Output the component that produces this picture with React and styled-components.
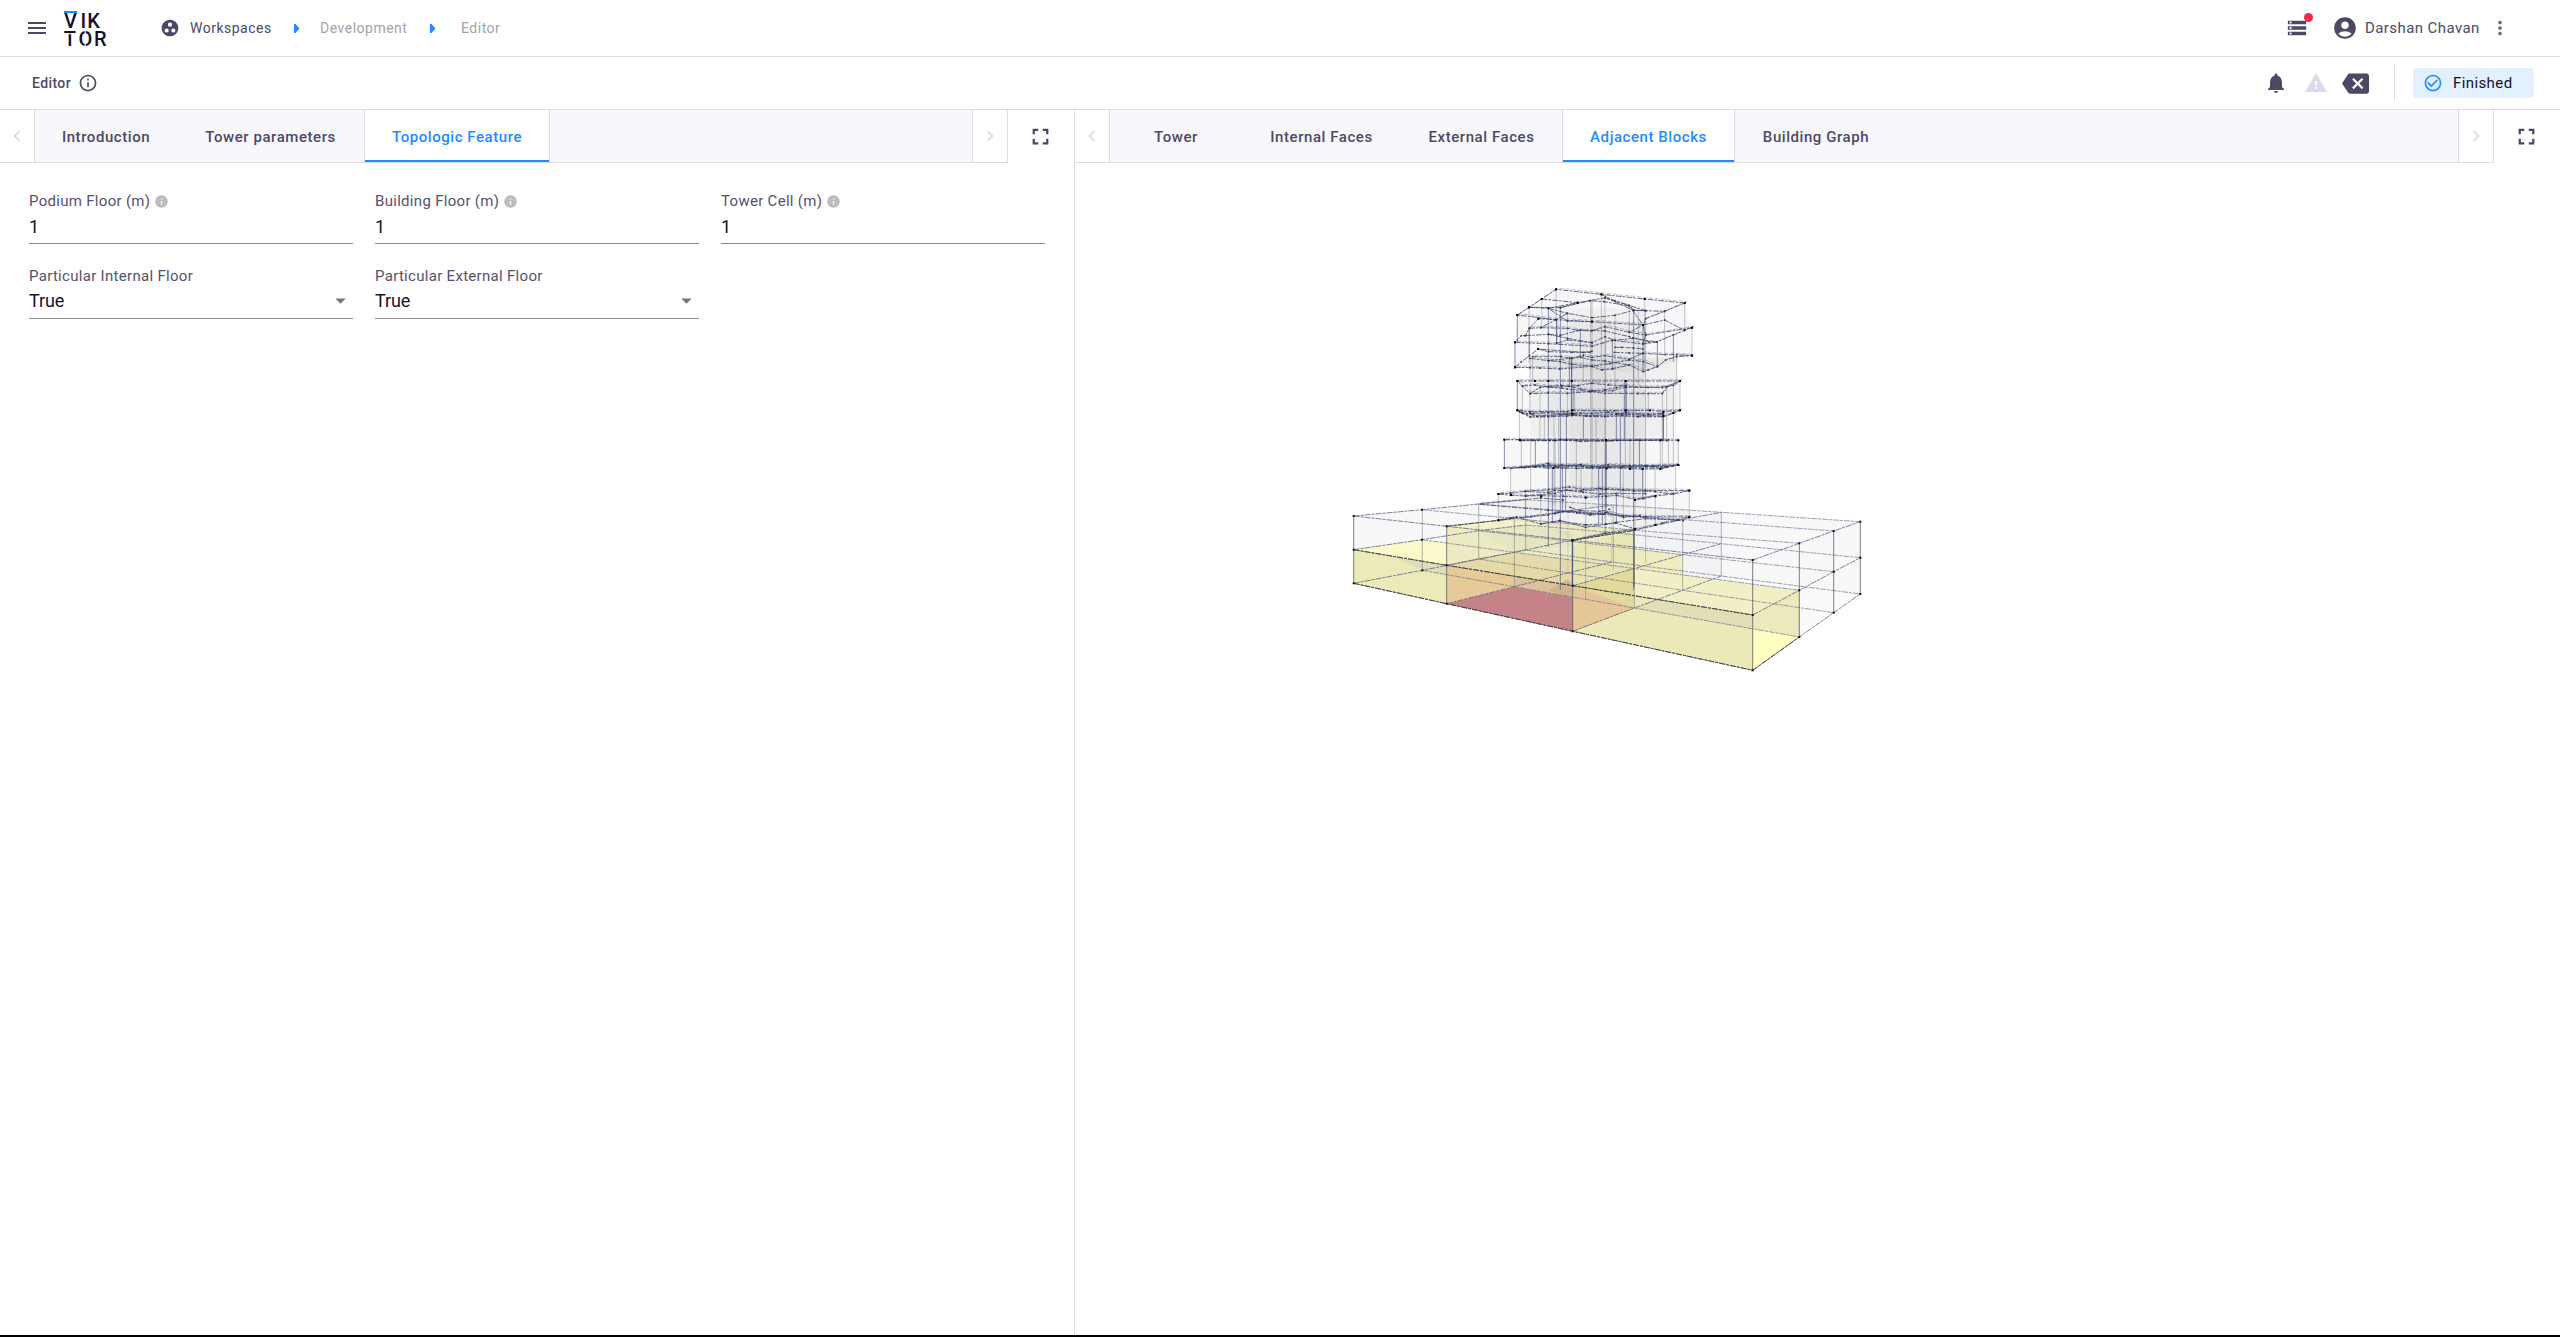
import React from "react";
import styled, { createGlobalStyle } from "styled-components";
import {
  MdMenu, MdGroupWork, MdStorage, MdAccountCircle, MdMoreVert, MdNotifications,
  MdWarning, MdBackspace, MdCheckCircleOutline, MdOutlineInfo, MdInfo,
  MdFullscreen, MdChevronLeft, MdChevronRight, MdArrowDropDown,
} from "react-icons/md";

const ink = "#4d4965";
const line = "#dddddf";
const blue = "#1e8cff";
const pale = "#dadaea";

const Global = createGlobalStyle`
  * { box-sizing: border-box; }
  body { margin: 0; background: #fff; font-family: Roboto, "Liberation Sans", sans-serif; color: ${ink}; }
  svg { display: block; flex: none; }
`;

const Page = styled.div`
  height: 1337px;
  display: flex;
  flex-direction: column;
  border-bottom: 2px solid #000;
  overflow: hidden;
`;

const Bar = styled.header`
  display: flex;
  align-items: center;
  flex: none;
  height: ${(p) => p.$height}px;
  padding: 0 ${(p) => p.$right}px 0 ${(p) => p.$left}px;
  border-bottom: 1px solid ${line};
`;

const Icon = styled.span`
  display: flex;
  align-items: center;
  justify-content: center;
  flex: none;
  width: ${(p) => p.$size}px;
  height: ${(p) => p.$size}px;
  margin-left: ${(p) => p.$gap || 0}px;
  color: ${(p) => p.$color || ink};
  svg { width: ${(p) => p.$size}px; height: ${(p) => p.$size}px; }
`;

const Logo = styled.svg`
  width: 44px;
  height: 38px;
  margin-left: 14px;
  overflow: visible;
  font: 500 20px Roboto, sans-serif;
  fill: #14122b;
`;

const Crumb = styled.span`
  font-size: 14px;
  letter-spacing: 0.5px;
  white-space: nowrap;
  width: ${(p) => p.$width}px;
  margin-left: ${(p) => p.$gap}px;
  color: ${(p) => (p.$muted ? "#a3a3a6" : ink)};
`;

const Arrow = styled.svg`
  width: 6px;
  height: 9px;
  margin-left: ${(p) => p.$gap}px;
  fill: ${blue};
`;

const Spacer = styled.div`
  flex: 1;
`;

const Alert = styled.div`
  position: relative;
  &::after {
    content: "";
    position: absolute;
    right: -5px;
    top: -4px;
    width: 9px;
    height: 9px;
    border-radius: 50%;
    background: #f02849;
  }
`;

const User = styled.span`
  width: 113px;
  margin-left: 7px;
  font-size: 15px;
  letter-spacing: 0.42px;
  white-space: nowrap;
`;

const Title = styled.span`
  width: 39px;
  font-size: 14px;
  font-weight: 500;
  letter-spacing: 0.4px;
`;

const Rule = styled.div`
  width: 1px;
  height: 36px;
  margin: 0 18px 0 25px;
  background: ${line};
`;

const Status = styled.div`
  display: flex;
  align-items: center;
  width: 121px;
  height: 30px;
  padding-left: 10px;
  gap: 10px;
  border-radius: 4px;
  background: #e2f0ff;
  color: #14122b;
  font-size: 15px;
  letter-spacing: 0.4px;
`;

const Body = styled.main`
  display: flex;
  flex: 1;
  min-height: 0;
`;

const Pane = styled.section`
  display: flex;
  flex-direction: column;
  flex: ${(p) => (p.$width ? `0 0 ${p.$width}px` : "1")};
  min-width: 0;
  border-right: ${(p) => (p.$width ? `1px solid ${line}` : "0")};
`;

const TabRow = styled.div`
  display: flex;
  height: 53px;
  flex: none;
`;

const Strip = styled.nav`
  display: flex;
  flex: 1;
  background: #f7f7fc;
  border-bottom: 1px solid ${line};
`;

const Nudge = styled.div`
  display: flex;
  align-items: center;
  justify-content: center;
  width: ${(p) => p.$width}px;
  border-right: 1px solid ${line};
  border-left: ${(p) => (p.$end ? 1 : 0)}px solid ${line};
  border-bottom: 1px solid ${line};
  background: #fff;
`;

const Tab = styled.a`
  display: flex;
  align-items: center;
  justify-content: center;
  width: ${(p) => p.$width}px;
  height: 52px;
  padding-top: 1px;
  font-size: 15px;
  font-weight: 500;
  letter-spacing: 0.56px;
  white-space: nowrap;
  color: ${(p) => (p.$active ? blue : ink)};
  background: ${(p) => (p.$active ? "#fff" : "transparent")};
  border: 0 solid ${line};
  border-width: 0 ${(p) => (p.$active ? 1 : 0)}px;
  box-shadow: ${(p) => (p.$active ? `inset 0 -2px 0 ${blue}` : "none")};
`;

const Expand = styled.div`
  display: flex;
  align-items: center;
  justify-content: center;
  width: 66px;
  padding-right: 1px;
`;

const Form = styled.div`
  display: grid;
  grid-template-columns: repeat(3, 324px);
  column-gap: 22px;
  row-gap: 22px;
  padding: 28px 29px;
`;

const Field = styled.div`
  height: 53px;
  border-bottom: 1px solid #8b8b8f;
`;

const Label = styled.div`
  display: flex;
  align-items: center;
  height: 20px;
  font-size: 15px;
  letter-spacing: 0.3px;
  color: #55516d;
`;

const Value = styled.div`
  display: flex;
  justify-content: space-between;
  align-items: center;
  height: ${(p) => (p.$select ? 29 : 31)}px;
  font-size: 18px;
  letter-spacing: -0.1px;
  color: #14122b;
`;

const Viewer = styled.svg`
  width: 1485px;
  height: 1172px;
`;

const TabsBar = ({ items, lead, end }) => (
  <TabRow>
    <Nudge $width={lead}><Icon $size={22} $color={pale}><MdChevronLeft /></Icon></Nudge>
    <Strip>
      {items.map(([t, w, a]) => <Tab key={t} $width={w} $active={a}>{t}</Tab>)}
    </Strip>
    <Nudge $width={end} $end><Icon $size={22} $color={pale}><MdChevronRight /></Icon></Nudge>
    <Expand><Icon $size={27}><MdFullscreen /></Icon></Expand>
  </TabRow>
);

const Input = ({ label, value, select }) => (
  <Field>
    <Label>{label}{!select && <Icon $size={15} $gap={4} $color="#bdbdbd"><MdInfo /></Icon>}</Label>
    <Value $select={select}>{value}{select && <Icon $size={25} $color="#757575"><MdArrowDropDown /></Icon>}</Value>
  </Field>
);

// Podium grid: rows run front to back, columns left to right.
const bottom = [
  [[1353.7, 583.3], [1446.7, 603.7], [1572.7, 631.3], [1752.7, 670.3]],
  [[1422.3, 570.3], [1514.3, 586.7], [1634.3, 608], [1799.3, 637]],
  [[1478.7, 559], [1568, 573], [1682.7, 590.3], [1833.7, 612.7]],
  [[1525.7, 550], [1612, 562], [1721.3, 576], [1860.3, 594]],
];
const middle = [
  [[1353.7, 549.7], [1446.7, 565.3], [1572.7, 585.7], [1752.7, 615]],
  [[1422, 539.7], [1514.3, 552.3], [1634.3, 568.5], [1799.3, 590.3]],
  [[1478.7, 530.7], [1568, 541], [1682.7, 554.7], [1833.7, 571.7]],
  [[1525.7, 525], [1612, 532.5], [1721.3, 543.7], [1860.3, 557.7]],
];
const top = [
  [[1353.7, 516], [1446.7, 526.3], [1572.7, 540.3], [1752.7, 560]],
  [[1422, 509.7], [1514.3, 518.5], [1634.3, 530.3], [1799.3, 543.3]],
  [[1478.7, 504], [1568, 511], [1682.7, 519.5], [1833.7, 531]],
  [[1525.7, 499.7], [1612, 505], [1721.3, 512.3], [1860.3, 521.7]],
];
const levels = [bottom, middle, top];
const join = (pts) => pts.map((p) => p.join(",")).join(" ");
const Face = ({ p, fill, o = 1 }) => <polygon points={join(p)} fill={fill} opacity={o} />;

const Podium = () => {
  const [b, m, t] = levels;
  return (
    <g>
      <Face p={[t[0][0], t[3][0], t[3][3], b[3][3], b[0][3], b[0][0]]} fill="#f8f8f9" />
      <Face p={[t[0][2], t[3][2], b[3][2], b[0][2]]} fill="#ececf0" o={0.4} />
      <Face p={[b[0][2], b[0][3], b[3][3], b[3][2]]} fill="#ffffff" o={0.35} />
      <Face p={[m[0][0], m[1][0], m[1][1], b[1][1], b[0][1], b[0][0]]} fill="#ebeab8" />
      <Face p={[m[0][0], m[1][0], m[1][1], m[0][1]]} fill="#fbf9cc" />
      <Face p={[[1394, 557], b[1][0], [1446.7, 575], m[0][1]]} fill="#dedeb8" />
      <Face p={[m[1][1], m[2][1], m[2][2], b[2][2], b[1][2], b[1][1]]} fill="#eeecc0" />
      <Face p={[t[0][1], t[1][1], t[1][2], m[1][2], m[0][2], m[0][1]]} fill="#ecebc4" />
      <Face p={[t[0][1], t[1][1], t[1][2], t[0][2]]} fill="#f3f1c8" />
      <Face p={[[1478, 531], [1525, 525], [1572.7, 532], [1572.7, 546], m[1][1]]} fill="#e4e3bd" o={0.7} />
      <Face p={[[1446.7, 565.3], m[1][1], m[1][2], [1572.7, 585.7]]} fill="#e5dbaa" />
      <Face p={[[1572.7, 546], [1634.3, 531], m[1][2], m[0][2]]} fill="#e7e3b3" o={0.8} />
      <Face p={[m[0][2], m[1][2], m[1][3], b[1][3], b[0][3], b[0][2]]} fill="#eae9b7" />
      <Face p={[m[0][2], m[1][2], m[1][3], m[0][3]]} fill="#f1efc5" />
      <Face p={[b[1][2], [1655, 600], m[0][3], [1752.7, 629]]} fill="#e0dfb6" />
      <Face p={[[1752.7, 615], m[1][3], b[1][3], [1752.7, 629]]} fill="#eceabc" />
      <Face p={[[1752.7, 629], b[1][3], b[0][3]]} fill="#ffffc2" />
      <Face p={[b[0][1], b[1][1], b[1][2], b[0][2]]} fill="#c48289" />
      <Face p={[m[0][1], b[0][1], b[1][1], [1514.3, 576]]} fill="#e7ca97" />
      <Face p={[m[0][1], [1480, 557], [1572.7, 570], [1572.7, 585.7]]} fill="#e4d9a7" />
      <Face p={[m[0][1], m[0][2], [1572.7, 597], b[1][1], [1514.3, 576]]} fill="#dcc29c" />
      <Face p={[m[0][2], b[0][2], b[1][2], [1634.3, 604]]} fill="#e4c697" />
      <Face p={[m[0][2], m[1][2], b[1][2]]} fill="#e2d99c" />
      <Face p={[[1548, 591], [1568, 579], [1572.7, 585.7], [1572.7, 597]]} fill="#cdb58c" />
      <g fill="none" stroke="#606684" strokeWidth="1" opacity="0.8" strokeDasharray="6 1 3 1">
        {levels.map((l, i) => (
          <g key={i}>
            {[0, 1, 2, 3].map((r) => (
              <React.Fragment key={r}>
                <polyline points={join(l[r])} opacity={r === 0 ? 1 : 0.75} />
                <polyline points={join(l.map((row) => row[r]))} />
              </React.Fragment>
            ))}
          </g>
        ))}
        <polyline points={join(b[0])} stroke="#222" />
        <polyline points={join(m[0])} stroke="#222" />
        <polyline points={join([b[0][3], b[1][3]])} stroke="#222" />
        <polyline points={join([t[0][1], t[1][1]])} stroke="#222" />
        <polyline points={join([t[0][2], t[1][2]])} stroke="#222" />
      </g>
      <g stroke="#55555d" strokeWidth="1" opacity="0.75">
        {[0, 1, 2, 3].map((r) => [0, 1, 2, 3].map((c) => (
          <line key={`${r}${c}`} x1={b[r][c][0]} x2={b[r][c][0]} y1={t[r][c][1]} y2={b[r][c][1]}
            opacity={r === 0 || c === 3 ? 1 : r > 1 && c > 0 && c < 2 ? 0.25 : 0.55} />
        )))}
        <line x1="1634" x2="1634" y1="528" y2="587" stroke="#34364a" strokeWidth="1.2" opacity="0.8" />
      </g>
      <g fill="#111">
        {levels.map((l, i) => l.map((row, r) => row.map((p, c) => (r === 0 || c === 3 || (c === 0 && r < 2)) && (
          <rect key={`${i}${r}${c}`} x={p[0] - 1} y={p[1] - 1} width="2" height="2" />
        ))))}
      </g>
    </g>
  );
};

// Tower geometry is kept at three units per pixel.
const slabs = [
  [[112, 135], [147, 112], [185, 87], [228, 58], [364, 73], [494, 87], [614, 99], [634, 173], [636, 257], [490, 305], [105, 292], [105, 217]],
  [[150, 265], [590, 260], [590, 333], [150, 333]],
  [[112, 333], [600, 333], [600, 421], [550, 440], [150, 440], [112, 421]],
  [[118, 425], [550, 425], [550, 511], [118, 509]],
  [[73, 509], [595, 511], [595, 585], [547, 598], [73, 594]],
  [[92, 595], [587, 590], [587, 662], [92, 675]],
  [[55, 672], [270, 653], [628, 662], [628, 741], [465, 778], [277, 811], [182, 762], [55, 751]],
];

const edges = [
  "112,135 147,112 185,87 228,58 364,73 494,87 614,99 554,124 497,146 489,165 336,155 228,149 112,135",
  "205,115 293,98 330,92 375,83 448,106 461,121 497,122",
  "205,115 262,130 336,143 405,136 461,121 554,124",
  "242,113 330,92 372,95 448,108 489,165 448,187",
  "185,87 293,98 241,113 147,112", "147,112 205,115 262,153 336,155",
  "262,130 228,149 182,173", "375,83 461,121", "364,73 405,93 497,122",
  "105,217 124,197 136,197 148,175 175,146 228,149",
  "105,217 205,221 336,229 397,211 489,222 530,216 580,195 614,181 636,173",
  "148,175 182,173 263,175 293,181 336,183 375,170 448,187 497,195 636,173",
  "205,193 241,196 301,180 375,183 448,200 507,216",
  "230,220 262,210 336,218 375,200 405,211 459,205 530,216",
  "136,197 205,193 262,205 336,218", "489,165 554,150 614,181",
  "105,292 124,275 148,258 174,237 310,247 336,244",
  "105,292 150,293 180,294 239,297 336,289 366,300 397,297 448,285 490,305 505,300 532,290 557,270 590,260 636,257",
  "150,265 205,272 241,275 275,283 336,289 390,281 448,270 490,275 532,290",
  "158,260 243,260 275,265 310,257 336,262 375,257 448,268 489,250 555,254 590,254 636,257",
  "174,237 205,245 275,247 330,247", "405,232 425,232 460,234 489,237", "403,247 448,249 489,250",
  "205,272 270,265 302,262 336,270 375,273 448,285", "489,165 497,195 489,222",
  "112,333 165,333 205,333 275,333 437,333 600,333 580,346 560,350 547,371 505,371 474,371 374,370 330,365 262,370 205,369 150,371 127,348 112,333",
  "127,348 165,345 205,351 245,351 293,347 336,340 385,345 437,348 505,352 560,350 600,333",
  "150,371 180,352 243,346 268,349 302,357 336,362 375,360 410,353 437,348",
  "205,351 262,357 330,365 397,362 437,352 547,353",
  "112,421 150,425 262,425 277,421 403,422 437,421 510,421 550,424 600,421 580,429 550,440 474,440 425,437 374,440 330,439 277,436 262,438 205,440 150,441 127,430 112,421",
  "118,425 140,432 205,428 262,432 302,429 336,430 385,427 425,432 490,436 550,434",
  "150,430 170,439 241,434 277,432 320,438 410,433 438,428 505,433 550,430",
  "73,509 118,509 155,510 241,509 378,510 450,511 547,509 565,510 595,511",
  "120,512 225,512 259,510 300,514 378,513 410,511 480,511 541,511",
  "120,510 210,511 289,510 395,512 470,510 560,512",
  "73,594 124,592 205,586 245,585 310,588 336,590 385,584 450,587 500,589 560,590 595,585",
  "92,595 166,591 205,594 248,594 289,595 360,594 423,594 488,597 541,596 580,588",
  "133,593 205,580 225,589 303,584 370,592 430,590 497,587 595,585",
  "124,592 190,588 236,592 289,588 336,594 385,590 450,592 520,590 560,592",
  "55,672 92,669 136,664 205,659 268,651 310,658 360,655 430,659 497,661 628,662 580,672 526,678 490,686 465,690",
  "55,672 95,676 137,678 182,677 250,679 317,682 378,679 409,676 465,688 526,678",
  "136,664 205,668 225,661 303,663 378,658 461,663 525,665 580,672",
  "137,678 225,670 261,660 310,667 360,672 409,670 497,671",
  "55,751 92,744 151,741 205,735 235,727 275,723 336,733 375,728 430,738 497,740 628,741 595,750 548,759 526,765 465,778 375,790 277,811",
  "55,751 110,741 182,762 239,751 317,772 405,759 465,776",
  "182,762 241,754 317,764 378,762 409,757 497,746 595,750",
  "225,731 248,725 290,729 330,735 370,733 380,726 430,742 480,737",
  "270,712 300,722 360,724 388,718", "0,700 182,684 250,690", "0,703 205,721 461,740 610,752",
];

const verticals = [
  [112, 135, 217, 1], [147, 112, 280, 0], [185, 87, 173, 0], [228, 58, 149, 0], [364, 73, 285, 0],
  [614, 99, 181, 0], [554, 124, 250, 0], [494, 87, 305, 0], [105, 217, 292, 1], [636, 173, 257, 0],
  [580, 195, 275, 1], [532, 216, 290, 1], [205, 115, 830, 1], [241, 112, 960, 1], [336, 93, 660, 0],
  [332, 93, 590, 0], [375, 83, 790, 0], [377, 170, 790, 0], [461, 121, 960, 1], [497, 122, 880, 0],
  [448, 106, 187, 0], [475, 113, 345, 0], [489, 165, 305, 1], [397, 211, 297, 1], [405, 136, 350, 0],
  [301, 180, 265, 1], [148, 173, 258, 1], [230, 149, 221, 2], [262, 130, 205, 0], [150, 265, 371, 0],
  [158, 260, 333, 0], [268, 260, 345, 1], [275, 265, 440, 2], [310, 247, 335, 0], [590, 260, 345, 0],
  [112, 333, 421, 1], [600, 333, 421, 0], [150, 371, 440, 0], [127, 348, 430, 0], [180, 352, 510, 0],
  [262, 371, 440, 0], [282, 345, 425, 1], [433, 333, 509, 1], [438, 333, 440, 2], [547, 371, 600, 0],
  [505, 371, 440, 0], [580, 346, 510, 0], [560, 350, 510, 0], [118, 421, 510, 0], [193, 440, 510, 0],
  [222, 430, 705, 0], [236, 433, 595, 0], [259, 435, 595, 1], [310, 440, 510, 1], [348, 440, 590, 0],
  [409, 430, 510, 1], [421, 430, 670, 1], [436, 430, 590, 0], [550, 424, 510, 2], [73, 509, 594, 1],
  [124, 512, 592, 0], [152, 510, 668, 0], [166, 512, 592, 1], [225, 512, 735, 0], [289, 512, 665, 0],
  [378, 510, 715, 2], [450, 511, 594, 0], [478, 511, 590, 1], [541, 512, 596, 0], [565, 510, 588, 0],
  [580, 511, 590, 0], [595, 511, 585, 0], [92, 595, 675, 0], [217, 594, 760, 1], [247, 594, 720, 1],
  [257, 594, 720, 1], [303, 588, 660, 0], [356, 594, 762, 1], [367, 594, 760, 1], [430, 594, 750, 0],
  [488, 594, 686, 1], [525, 594, 665, 0], [587, 588, 662, 0], [55, 672, 751, 0], [136, 664, 742, 0],
  [182, 677, 762, 0], [317, 682, 772, 0], [409, 676, 759, 1], [465, 690, 778, 0], [526, 678, 765, 0],
  [580, 672, 752, 0], [628, 662, 741, 0], [277, 811, 945, 2], [400, 702, 900, 0], [317, 772, 990, 0],
];

const strong = [[228,58],[364,73],[494,87],[614,99],[185,87],[147,112],[112,135],[175,146],[105,217],[105,292],[174,237],[636,173],[636,257],[336,155],[489,165],[293,98],[112,333],[165,333],[205,333],[275,333],[437,333],[600,333],[112,421],[277,421],[277,431],[437,421],[510,421],[600,421],[550,426],[550,438],[580,429],[73,509],[120,510],[378,510],[541,511],[595,511],[73,594],[220,594],[380,595],[450,597],[488,597],[541,597],[595,585],[55,672],[93,675],[184,679],[317,683],[628,662],[526,679],[465,690],[55,751],[628,741],[526,765],[465,778],[277,811]];

const levelOf = (e) => Number(e.split(" ")[0].split(",")[1]);

const Tower = () => (
  <g transform="translate(1480 270) scale(0.33333)">
    {slabs.map((p, i) => <Face key={i} p={p} fill="#77777d" o={0.06} />)}
    {[[205, 115, 292, 600], [150, 265, 440, 235], [268, 155, 229, 530], [330, 140, 48, 550]].map(([x, y, w, h], i) => (
      <rect key={i} x={x} y={y} width={w} height={h} fill="#77777d" opacity="0.05" />
    ))}
    <g fill="none">
      {verticals.map(([x, a, b, k], i) => (
        <line key={i} x1={x} x2={x} y1={a} y2={b}
          stroke={["#77777c", "#4d5788", "#3a437c"][k]} strokeWidth={[2.8, 3, 3.4][k]} opacity={[0.45, 0.68, 0.8][k]} />
      ))}
      {edges.map((e, i) => (
        <polyline key={i} points={e} stroke="#3f4570" strokeWidth={levelOf(e) > 415 && levelOf(e) < 600 ? 3.6 : 3}
          opacity="0.8" strokeDasharray="17 3 8 4" />
      ))}
      <g transform="translate(6 -4)">
        {edges.filter((e) => e.length > 60).map((e, i) => (
          <polyline key={i} points={e} stroke="#4a5078" strokeWidth="2.4" opacity="0.45" strokeDasharray="12 6" />
        ))}
      </g>
    </g>
    <g fill="#222" opacity="0.75">
      {edges.flatMap((e, i) => e.split(" ").map((s, j) => {
        const [x, y] = s.split(",").map(Number);
        return x > 0 && <rect key={`${i}-${j}`} x={x - 2.5} y={y - 2.5} width="5" height="5" />;
      }))}
    </g>
    <g fill="#000">
      {strong.map(([x, y], i) => <rect key={i} x={x - 3} y={y - 3} width="6" height="6" />)}
    </g>
  </g>
);

export default function App() {
  return (
    <Page>
      <Global />
      <Bar $height={57} $left={25} $right={49}>
        <Icon $size={24}><MdMenu /></Icon>
        <Logo viewBox="63 9 44 38">
          <rect x="64" y="11" width="13" height="2" fill={blue} />
          <text x="64 80.5 87.2" y="28.3">VIK</text>
          <text x="63.7 78.4 94" y="45.8">TOR</text>
          <rect x="63.5" y="33.2" width="14" height="1.1" fill="#fff" />
          <rect x="84.7" y="30" width="1.1" height="17" fill="#fff" />
        </Logo>
        <Icon $size={20} $gap={53}><MdGroupWork /></Icon>
        <Crumb $gap={10} $width={84}>Workspaces</Crumb>
        <Arrow $gap={20} viewBox="0 0 6 9"><path d="M0 0h1.5l4 4.5-4 4.5H0z" /></Arrow>
        <Crumb $gap={20} $width={89} $muted>Development</Crumb>
        <Arrow $gap={21} viewBox="0 0 6 9"><path d="M0 0h1.5l4 4.5-4 4.5H0z" /></Arrow>
        <Crumb $gap={25} $width={42} $muted>Editor</Crumb>
        <Spacer />
        <Alert><Icon $size={22}><MdStorage /></Icon></Alert>
        <Icon $size={26} $gap={24}><MdAccountCircle /></Icon>
        <User>Darshan Chavan</User>
        <Icon $size={22} $gap={11} $color="#6b6b70"><MdMoreVert /></Icon>
      </Bar>
      <Bar $height={53} $left={32} $right={26}>
        <Title>Editor</Title>
        <Icon $size={20} $gap={7}><MdOutlineInfo /></Icon>
        <Spacer />
        <Icon $size={24}><MdNotifications /></Icon>
        <Icon $size={24} $gap={16} $color={pale}><MdWarning /></Icon>
        <Icon $size={27} $gap={14}><MdBackspace /></Icon>
        <Rule />
        <Status><Icon $size={20} $color={blue}><MdCheckCircleOutline /></Icon>Finished</Status>
      </Bar>
      <Body>
        <Pane $width={1075}>
          <TabsBar lead={35} end={36} items={[["Introduction", 142], ["Tower parameters", 187], ["Topologic Feature", 186, true]]} />
          <Form>
            <Input label="Podium Floor (m)" value="1" />
            <Input label="Building Floor (m)" value="1" />
            <Input label="Tower Cell (m)" value="1" />
            <Input label="Particular Internal Floor" value="True" select />
            <Input label="Particular External Floor" value="True" select />
          </Form>
        </Pane>
        <Pane>
          <TabsBar lead={35} end={36} items={[["Tower", 132], ["Internal Faces", 159], ["External Faces", 161], ["Adjacent Blocks", 173, true], ["Building Graph", 162]]} />
          <Viewer viewBox="1075 163 1485 1172">
            <Podium />
            <Tower />
          </Viewer>
        </Pane>
      </Body>
    </Page>
  );
}
